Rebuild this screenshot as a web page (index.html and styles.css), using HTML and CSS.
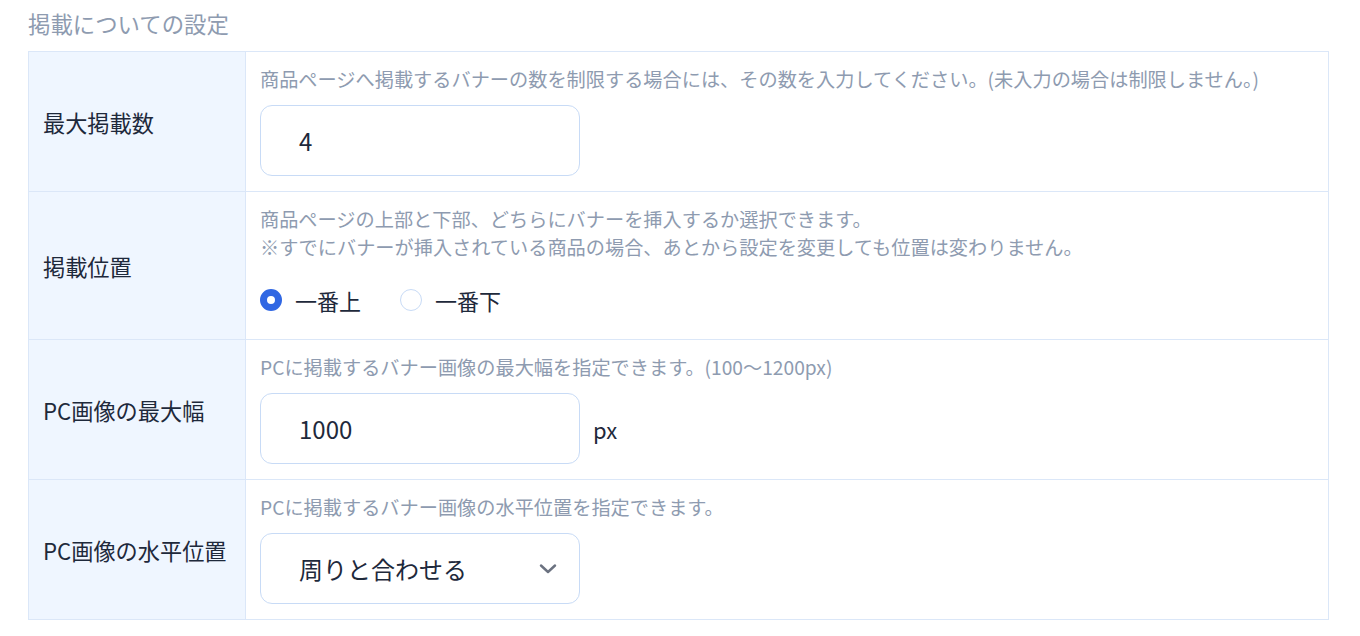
FILE: index.html
```html
<!DOCTYPE html>
<html lang="ja">
<head>
<meta charset="utf-8">
<link rel="stylesheet" href="styles.css">
</head>
<body>
<div class="page">
  <h2 class="title">掲載についての設定</h2>
  <div class="table">
    <div class="label">最大掲載数</div>
    <div class="value">
      <p class="desc">商品ページへ掲載するバナーの数を制限する場合には、その数を入力してください。(未入力の場合は制限しません。)</p>
      <div class="field-row">
        <div class="input">4</div>
      </div>
    </div>

    <div class="label">掲載位置</div>
    <div class="value">
      <p class="desc">商品ページの上部と下部、どちらにバナーを挿入するか選択できます。<br>※すでにバナーが挿入されている商品の場合、あとから設定を変更しても位置は変わりません。</p>
      <div class="radio-row">
        <label class="radio"><span class="dot checked"></span><span>一番上</span></label>
        <label class="radio"><span class="dot"></span><span>一番下</span></label>
      </div>
    </div>

    <div class="label">PC画像の最大幅</div>
    <div class="value">
      <p class="desc">PCに掲載するバナー画像の最大幅を指定できます。(100〜1200px)</p>
      <div class="field-row">
        <div class="input">1000</div>
        <span class="unit">px</span>
      </div>
    </div>

    <div class="label">PC画像の水平位置</div>
    <div class="value">
      <p class="desc">PCに掲載するバナー画像の水平位置を指定できます。</p>
      <div class="field-row">
        <div class="input select">
          <span>周りと合わせる</span>
          <svg class="chev" width="18" height="10" viewBox="0 0 18 10"><path d="M2 1.5 L9 8 L16 1.5" fill="none" stroke="#6b7280" stroke-width="2.4" stroke-linecap="round" stroke-linejoin="round"/></svg>
        </div>
      </div>
    </div>
  </div>
</div>
</body>
</html>
```
FILE: styles.css
```css
* { box-sizing: border-box; }
html, body {
  margin: 0;
  padding: 0;
  background: #ffffff;
}
body {
  font-family: "Noto Sans CJK JP", "Noto Sans", sans-serif;
  color: #1e293b;
}
.page {
  padding: 7px 0 0 28px;
}
.title {
  margin: 0 0 12px 0;
  height: 32px;
  line-height: 32px;
  font-size: 22.4px;
  font-weight: 400;
  color: #8e9bb0;
}
.table {
  width: 1301px;
  display: grid;
  grid-template-columns: 217px 1083px;
  border-top: 1px solid #dbe7f8;
  border-left: 1px solid #dbe7f8;
}
.label {
  background: #eff6ff;
  border-right: 1px solid #dbe7f8;
  border-bottom: 1px solid #dbe7f8;
  display: flex;
  align-items: center;
  padding-left: 14px;
  font-size: 22.2px;
  color: #1e293b;
}
.value {
  border-right: 1px solid #dbe7f8;
  border-bottom: 1px solid #dbe7f8;
  padding: 13px 15px 15px 14px;
}
.desc {
  margin: 0;
  font-size: 19.2px;
  line-height: 28px;
  color: #8e9bb0;
  white-space: nowrap;
}
.field-row {
  margin-top: 12px;
  display: flex;
  align-items: center;
}
.input {
  width: 320px;
  height: 71px;
  border: 1px solid #c8dbf6;
  border-radius: 12px;
  padding-left: 38px;
  display: flex;
  align-items: center;
  font-size: 24px;
  color: #1e293b;
  background: #fff;
}
.select {
  justify-content: space-between;
  padding-right: 22px;
}
.chev { display: block; }
.unit {
  margin-left: 13px;
  font-size: 22px;
  color: #1e293b;
}
.radio-row {
  margin-top: 14px;
  height: 49px;
  display: flex;
  align-items: center;
  gap: 39px;
}
.radio {
  display: flex;
  align-items: center;
  gap: 13px;
  font-size: 22px;
  color: #1e293b;
}
.dot {
  width: 22px;
  height: 22px;
  border-radius: 50%;
  border: 1px solid #c8dbf6;
  background: #fff;
}
.dot.checked {
  border: 7px solid #3067e3;
  background: #fff;
}
```
